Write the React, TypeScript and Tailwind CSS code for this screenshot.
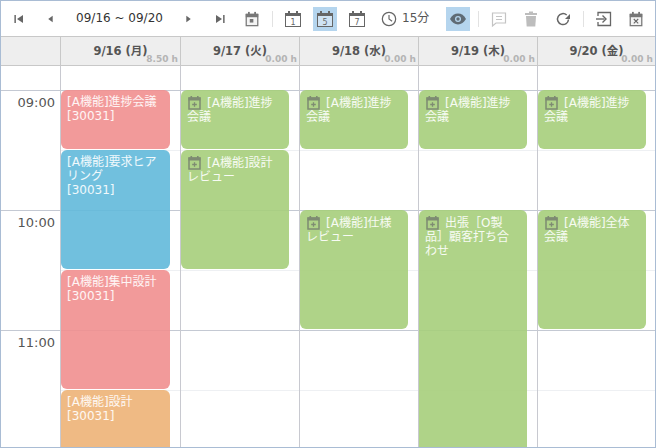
import React from "react";

const font = { fontFamily: '"DejaVu Sans", "Noto Sans CJK JP", sans-serif' };

function Btn({ active, children }: { active?: boolean; children: React.ReactNode }) {
  return (
    <div className={"flex h-6 w-6 shrink-0 items-center justify-center " + (active ? "bg-[#b5d5ee]" : "")}>
      {children}
    </div>
  );
}

function Sep() {
  return <div className="h-[16px] w-px shrink-0 bg-[#e2e2e2]" />;
}

function Svg({ children, size = 18 }: { children: React.ReactNode; size?: number }) {
  return (
    <svg width={size} height={size} viewBox="0 0 18 18" fill="none">
      {children}
    </svg>
  );
}

function CalNum({ n }: { n: string }) {
  return (
    <Svg>
      <rect x="1.5" y="3.5" width="15" height="13" fill="#fff" fillOpacity="0.35" stroke="#666" />
      <rect x="1" y="3" width="16" height="3" fill="#666" />
      <rect x="4" y="1" width="2" height="4" fill="#666" />
      <rect x="12" y="1" width="2" height="4" fill="#666" />
      <text x="9" y="14.5" fontSize="8" fill="#666" textAnchor="middle" fontFamily="DejaVu Sans">
        {n}
      </text>
    </Svg>
  );
}

function CalSolid({ mark }: { mark: "dot" | "x" }) {
  return (
    <Svg size={16}>
      <rect x="2.5" y="4" width="13" height="12.5" fill="#f4f4f4" stroke="#777" strokeWidth="1.4" />
      <rect x="2" y="3" width="14" height="4" fill="#777" />
      <rect x="4.5" y="1" width="2" height="3" fill="#777" />
      <rect x="11.5" y="1" width="2" height="3" fill="#777" />
      {mark === "dot" ? (
        <rect x="6.5" y="9" width="4" height="4" fill="#777" />
      ) : (
        <path d="M6.5 9l5 5M11.5 9l-5 5" stroke="#666" strokeWidth="1.2" />
      )}
    </Svg>
  );
}

function EventIcon() {
  return (
    <svg className="mr-[5px] inline-block align-[-3px]" width="15" height="15" viewBox="0 0 15 15" fill="none">
      <rect x="2" y="3" width="11" height="11" stroke="#7e8b72" strokeWidth="1.5" />
      <rect x="1.5" y="2.5" width="12" height="3" fill="#7e8b72" />
      <rect x="3.5" y="1" width="1.6" height="2" fill="#7e8b72" />
      <rect x="10" y="1" width="1.6" height="2" fill="#7e8b72" />
      <path d="M7.5 7.2v4.6M5.2 9.5h4.6" stroke="#7e8b72" strokeWidth="1.3" />
    </svg>
  );
}

type Ev = { top: number; h: number; color: string; text: string; code?: boolean; icon?: boolean };

const RED = "bg-[#f18f8f]/90";
const BLUE = "bg-[#62b9da]/90";
const GREEN = "bg-[#a6ce7b]/90";
const ORANGE = "bg-[#edb377]/90";

const days: { label: string; hours: string; cls: string; evW: string; events: Ev[] }[] = [
  {
    label: "9/16 (月)",
    hours: "8.50 h",
    cls: "w-[120px]",
    evW: "w-[109px]",
    events: [
      { top: 24, h: 59, color: RED, text: "[A機能]進捗会議", code: true },
      { top: 84, h: 119, color: BLUE, text: "[A機能]要求ヒアリング", code: true },
      { top: 204, h: 119, color: RED, text: "[A機能]集中設計", code: true },
      { top: 324, h: 70, color: ORANGE, text: "[A機能]設計", code: true },
    ],
  },
  {
    label: "9/17 (火)",
    hours: "0.00 h",
    cls: "w-[119px]",
    evW: "w-[108px]",
    events: [
      { top: 24, h: 59, color: GREEN, text: "[A機能]進捗会議", icon: true },
      { top: 84, h: 119, color: GREEN, text: "[A機能]設計レビュー", icon: true },
    ],
  },
  {
    label: "9/18 (水)",
    hours: "0.00 h",
    cls: "w-[119px]",
    evW: "w-[108px]",
    events: [
      { top: 24, h: 59, color: GREEN, text: "[A機能]進捗会議", icon: true },
      { top: 144, h: 119, color: GREEN, text: "[A機能]仕様レビュー", icon: true },
    ],
  },
  {
    label: "9/19 (木)",
    hours: "0.00 h",
    cls: "w-[119px]",
    evW: "w-[108px]",
    events: [
      { top: 24, h: 59, color: GREEN, text: "[A機能]進捗会議", icon: true },
      { top: 144, h: 250, color: GREEN, text: "出張［O製品］顧客打ち合わせ", icon: true },
    ],
  },
  {
    label: "9/20 (金)",
    hours: "0.00 h",
    cls: "w-[118px]",
    evW: "w-[108px]",
    events: [
      { top: 24, h: 59, color: GREEN, text: "[A機能]進捗会議", icon: true },
      { top: 144, h: 119, color: GREEN, text: "[A機能]全体会議", icon: true },
    ],
  },
];

function Toolbar() {
  return (
    <div className="flex h-[36px] shrink-0 items-center gap-2 border-b border-[#c8c8c8] pl-[6px]">
      <Btn>
        <Svg size={12}>
          <rect x="2" y="3" width="2.5" height="12" fill="#777" />
          <path d="M15 3v12L6 9z" fill="#666" />
        </Svg>
      </Btn>
      <Btn>
        <Svg size={10}>
          <path d="M12 3v12L4 9z" fill="#666" />
        </Svg>
      </Btn>
      <div className="w-[97px] shrink-0 pb-[2px] text-center text-[12px] text-[#333]">09/16 ~ 09/20</div>
      <Btn>
        <Svg size={10}>
          <path d="M6 3v12l8-6z" fill="#666" />
        </Svg>
      </Btn>
      <Btn>
        <Svg size={12}>
          <path d="M3 3v12l9-6z" fill="#666" />
          <rect x="13.5" y="3" width="2.5" height="12" fill="#777" />
        </Svg>
      </Btn>
      <Btn>
        <CalSolid mark="dot" />
      </Btn>
      <Sep />
      <Btn>
        <CalNum n="1" />
      </Btn>
      <Btn active>
        <CalNum n="5" />
      </Btn>
      <Btn>
        <CalNum n="7" />
      </Btn>
      <div className="flex w-[61px] shrink-0 items-center">
        <Btn>
          <Svg size={16}>
            <circle cx="9" cy="9" r="7.5" stroke="#666" strokeWidth="1.4" />
            <path d="M9 4.5V9l3.5 2.5" stroke="#666" strokeWidth="1.3" />
          </Svg>
        </Btn>
        <span className="ml-[1px] pb-[2px] text-[12px] text-[#555]">15分</span>
      </div>
      <Btn active>
        <Svg>
          <path d="M1 9c2-3.6 4.8-5.4 8-5.4S15 5.400 17 9c-2 3.600-4.800 5.400-8 5.400S3 12.600 1 9z" fill="#5f6b75" />
          <circle cx="9" cy="9" r="3" fill="#b5d5ee" />
          <circle cx="9" cy="9" r="1.700" fill="#5f6b75" />
        </Svg>
      </Btn>
      <Sep />
      <Btn>
        <Svg>
          <path d="M2.500 3h13v10H6l-3.500 3z" stroke="#c4c4c4" strokeWidth="1.200" />
          <path d="M6 6.500h6M6 9.500h6" stroke="#c4c4c4" />
        </Svg>
      </Btn>
      <Btn>
        <Svg>
          <rect x="3" y="3" width="12" height="2" fill="#bdbdbd" />
          <rect x="7" y="1.500" width="4" height="2" fill="#bdbdbd" />
          <path d="M4 6h10l-.7 10.500H4.700z" fill="#bdbdbd" />
        </Svg>
      </Btn>
      <Btn>
        <Svg>
          <path d="M14.500 9.500a5.500 5.500 0 1 1-1.800-4.500" stroke="#666" strokeWidth="1.500" />
          <path d="M16 4v5h-5z" fill="#666" />
        </Svg>
      </Btn>
      <Sep />
      <Btn>
        <Svg>
          <path d="M3 6V2.500h12.500v13H3V12" stroke="#666" strokeWidth="1.300" />
          <path d="M1 9h8.500" stroke="#666" strokeWidth="1.400" />
          <path d="M7.500 5.500L11 9l-3.500 3.500" stroke="#666" strokeWidth="1.400" />
        </Svg>
      </Btn>
      <Btn>
        <CalSolid mark="x" />
      </Btn>
    </div>
  );
}

function DayColumn({ day }: { day: (typeof days)[number] }) {
  return (
    <div className={"relative shrink-0 border-l border-[#c8c9d0] " + day.cls}>
      <div className="h-[25px] border-b border-[#c4c9d3]" />
      {[0, 1, 2].map((i) => (
        <div key={i}>
          <div className="h-[60px] border-b border-[#eef0f3]" />
          <div className="h-[60px] border-b border-[#c4c9d3]" />
        </div>
      ))}
      {day.events.map((e, i) => (
        <div
          key={i}
          className={"absolute left-0 overflow-hidden rounded-[6px] pt-[5px] pr-[8px] pl-[6px] text-[12px] leading-[14px] text-white/90 " + e.color + " " + day.evW}
          style={{ top: e.top, height: e.h }}
        >
          {e.icon && <EventIcon />}
          {e.text}
          {e.code && (
            <>
              <br />
              [30031]
            </>
          )}
        </div>
      ))}
    </div>
  );
}

export default function App() {
  return (
    <div className="flex h-[448px] w-[656px] flex-col overflow-hidden border border-[#a9bcd4] bg-white" style={font}>
      <Toolbar />
      <div className="flex h-[29px] shrink-0 border-b border-[#c8c8c8] bg-[#eeeeee]">
        <div className="w-[59px] shrink-0" />
        {days.map((d) => (
          <div key={d.label} className={"relative shrink-0 border-l border-[#c8c8c8] pt-[6px] text-center text-[11.5px] font-bold text-[#555] " + d.cls}>
            {d.label}
            <span className="absolute right-[2px] bottom-0 text-[9px] leading-[12px] text-[#b4b4b4]">{d.hours}</span>
          </div>
        ))}
      </div>
      <div className="flex min-h-0 flex-1 overflow-hidden">
        <div className="w-[59px] shrink-0">
          <div className="h-[25px] border-b border-[#c4c9d3]" />
          {["09:00", "10:00", "11:00"].map((t) => (
            <div key={t} className="h-[120px] border-b border-[#c4c9d3] pt-[4px] pr-[5px] text-right text-[13px] leading-[16px] text-[#555]">
              {t}
            </div>
          ))}
        </div>
        {days.map((d) => (
          <DayColumn key={d.label} day={d} />
        ))}
      </div>
    </div>
  );
}
